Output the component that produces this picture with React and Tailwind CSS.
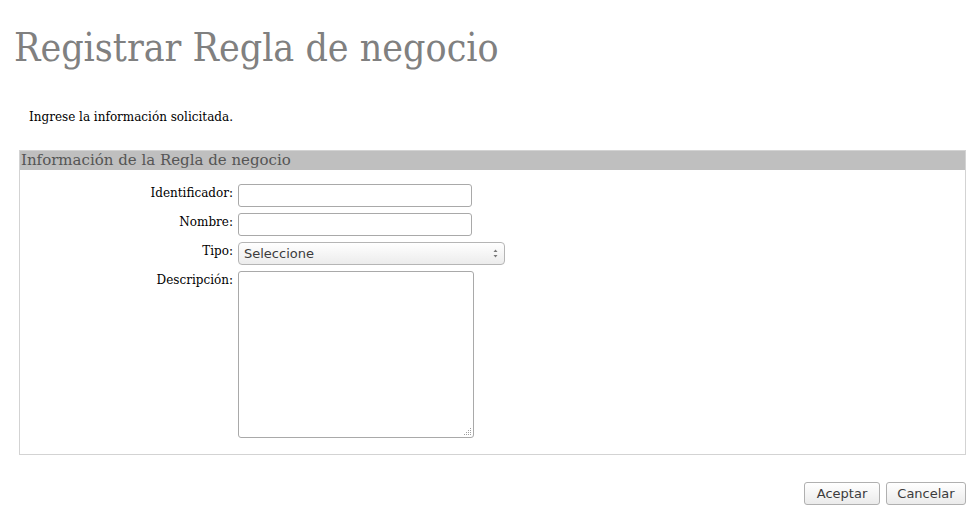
import React from "react";

const serif = "font-['DejaVu_Serif','Liberation_Serif',serif]";
const serifCond = "font-['DejaVu_Serif_Condensed','DejaVu_Serif',serif] font-stretch-condensed";
const sans = "font-['DejaVu_Sans','Open_Sans',sans-serif]";

const Field = ({ label, children }) => (
  <div className="flex items-start">
    <label className={`w-[218px] pt-[1px] pr-[5px] text-right text-[12px] leading-[16px] text-black ${serif}`}>
      {label}
    </label>
    {children}
  </div>
);

export default function App() {
  return (
    <div className="min-h-[524px] w-[978px] bg-white">
      <h1 className={`pl-[14px] pt-[25px] text-[39px] leading-[46px] text-[#808080] ${serifCond}`}>
        Registrar Regla de negocio
      </h1>

      <p className={`mt-[38px] pl-[29px] text-[12px] leading-[16px] text-black ${serif}`}>
        Ingrese la información solicitada.
      </p>

      <div className="ml-[19px] mt-[25px] w-[947px] border border-[#d3d3d3]">
        <div className={`h-[19px] bg-[#bfbfbf] pl-[1px] text-[15px] leading-[19px] text-[#555555] ${serif}`}>
          Información de la Regla de negocio
        </div>

        <div className="flex flex-col gap-[6px] pt-[14px] pb-[16px]">
          <Field label="Identificador:">
            <input
              type="text"
              className="h-[23px] w-[234px] rounded-[3px] border border-[#a9a9a9] bg-white outline-none"
            />
          </Field>
          <Field label="Nombre:">
            <input
              type="text"
              className="h-[23px] w-[234px] rounded-[3px] border border-[#a9a9a9] bg-white outline-none"
            />
          </Field>
          <Field label="Tipo:">
            <div className="relative h-[23px] w-[267px] rounded-[4px] border border-[#b5b5b5] bg-gradient-to-b from-white to-[#ececec]">
              <span className={`absolute left-[5px] top-[2px] text-[13px] leading-[17px] text-[#3c3c3c] ${sans}`}>
                Seleccione
              </span>
              <svg
                className="absolute right-[5px] top-[5px]"
                width="7"
                height="11"
                viewBox="0 0 7 11"
              >
                <path d="M1.5 4 L3.5 1.5 L5.5 4 Z" fill="#777" />
                <path d="M1.5 7 L3.5 9.5 L5.5 7 Z" fill="#777" />
              </svg>
            </div>
          </Field>
          <Field label="Descripción:">
            <div className="relative h-[167px] w-[236px] rounded-[3px] border border-[#a9a9a9] bg-white">
              <svg className="absolute bottom-[1px] right-[1px]" width="9" height="9" viewBox="0 0 9 9">
                <g fill="#a0a0a0">
                  <rect x="7" y="1" width="1" height="1" />
                  <rect x="5" y="3" width="1" height="1" />
                  <rect x="7" y="3" width="1" height="1" />
                  <rect x="3" y="5" width="1" height="1" />
                  <rect x="5" y="5" width="1" height="1" />
                  <rect x="7" y="5" width="1" height="1" />
                  <rect x="1" y="7" width="1" height="1" />
                  <rect x="3" y="7" width="1" height="1" />
                  <rect x="5" y="7" width="1" height="1" />
                  <rect x="7" y="7" width="1" height="1" />
                </g>
              </svg>
            </div>
          </Field>
        </div>
      </div>

      <div className="ml-[19px] mt-[27px] flex w-[947px] justify-end gap-[6px]">
        <button
          className={`h-[23px] w-[76px] rounded-[3px] border border-[#b0b0b0] bg-gradient-to-b from-white to-[#ebebeb] text-[13px] text-[#3c3c3c] ${sans}`}
        >
          Aceptar
        </button>
        <button
          className={`h-[23px] w-[80px] rounded-[3px] border border-[#b0b0b0] bg-gradient-to-b from-white to-[#ebebeb] text-[13px] text-[#3c3c3c] ${sans}`}
        >
          Cancelar
        </button>
      </div>
    </div>
  );
}
